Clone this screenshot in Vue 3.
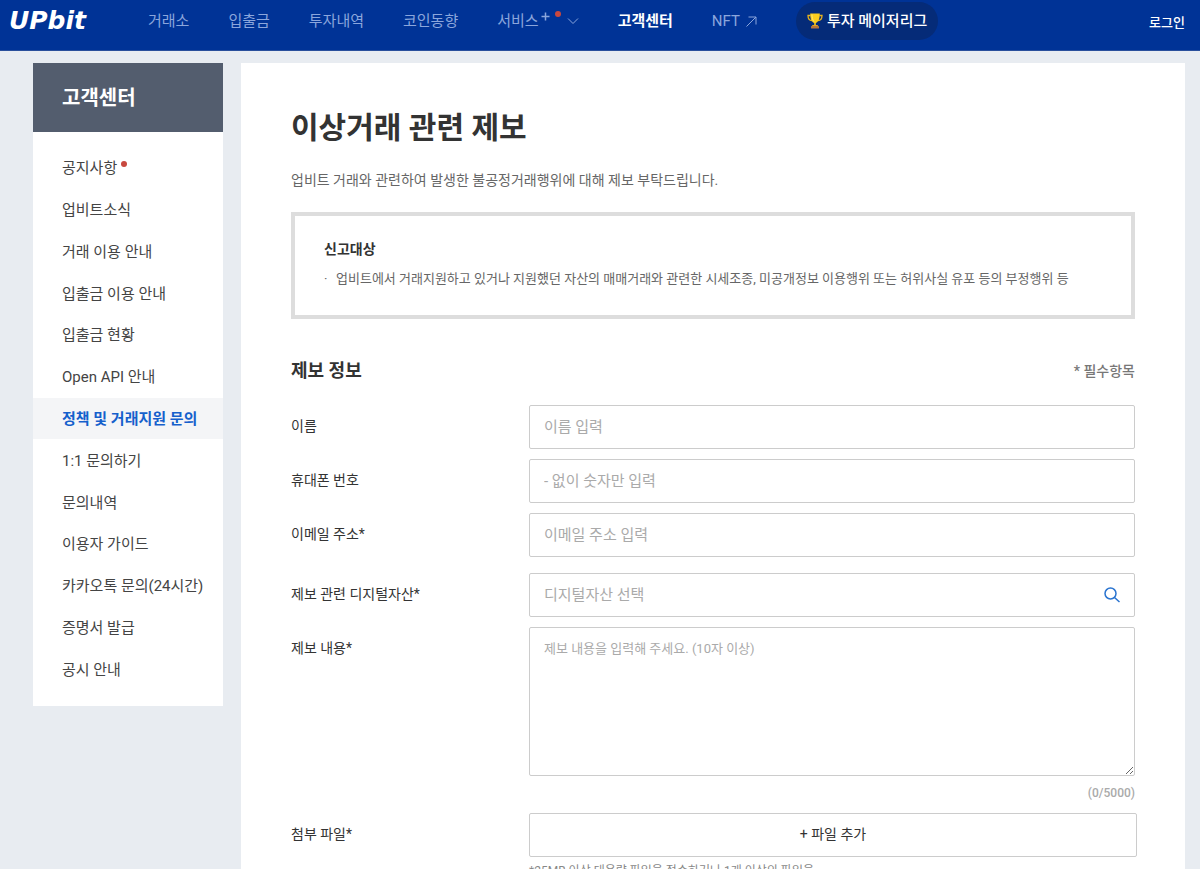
<script setup>
import { ref } from 'vue'

const sideMenu = [
  { label: '공지사항', isNew: true },
  { label: '업비트소식' },
  { label: '거래 이용 안내' },
  { label: '입출금 이용 안내' },
  { label: '입출금 현황' },
  { label: 'Open API 안내' },
  { label: '정책 및 거래지원 문의', active: true },
  { label: '1:1 문의하기' },
  { label: '문의내역' },
  { label: '이용자 가이드' },
  { label: '카카오톡 문의(24시간)' },
  { label: '증명서 발급' },
  { label: '공시 안내' },
]

const content = ref('')
</script>

<template>
  <div class="page">
    <header class="top">
      <a class="logo" href="#">UPbit</a>
      <nav class="gnb">
        <a href="#">거래소</a>
        <a href="#">입출금</a>
        <a href="#">투자내역</a>
        <a href="#">코인동향</a>
        <a href="#" class="service">
          <span>서비스</span>
          <svg class="plus" width="9" height="9" viewBox="0 0 9 9"><path d="M4.5 0.5v8M0.5 4.5h8" /></svg>
          <i class="dot"></i>
          <svg class="chev" width="12" height="8" viewBox="0 0 12 8"><path d="M1 1.5l5 5 5-5" /></svg>
        </a>
        <a href="#" class="on">고객센터</a>
        <a href="#" class="nft">
          <span>NFT</span>
          <svg width="11" height="11" viewBox="0 0 11 11"><path d="M0.5 10.5l9.5-9.5M2.5 1h7.5v7.5" /></svg>
        </a>
        <a href="#" class="league">
          <svg width="16" height="16" viewBox="0 0 16 16">
            <path d="M3.5 2.5H1c0 3 1 5 4 5.2M12.5 2.5H15c0 3-1 5-4 5.2" fill="none" stroke="#e8b21c" stroke-width="1.3" />
            <path d="M3.2 0.5h9.600c0 5-1.200 8.500-4 9.400v2.600H7.200V9.900C4.400 9 3.200 5.500 3.200 0.500z" fill="#fbcd1d" />
            <path d="M5 1.500c0 3 .5 5.500 2 7" fill="none" stroke="#ffe878" stroke-width="1" />
            <path d="M5.500 12h5l1 1.500h-7z" fill="#e8a51c" />
            <rect x="4" y="13" width="8" height="2.600" rx="0.500" fill="#b8763a" />
          </svg>
          <span>투자 메이저리그</span>
        </a>
      </nav>
      <a class="login" href="#">로그인</a>
    </header>

    <div class="body">
      <aside class="side">
        <h2>고객센터</h2>
        <ul>
          <li v-for="item in sideMenu" :key="item.label" :class="{ active: item.active }">
            <a href="#">{{ item.label }}</a><i v-if="item.isNew" class="dot"></i>
          </li>
        </ul>
      </aside>

      <main class="main">
        <h1>이상거래 관련 제보</h1>
        <p class="lead">업비트 거래와 관련하여 발생한 불공정거래행위에 대해 제보 부탁드립니다.</p>

        <section class="notice">
          <h3>신고대상</h3>
          <ul>
            <li>업비트에서 거래지원하고 있거나 지원했던 자산의 매매거래와 관련한 시세조종, 미공개정보 이용행위 또는 허위사실 유포 등의 부정행위 등</li>
          </ul>
        </section>

        <form @submit.prevent>
          <div class="form-head">
            <h2>제보 정보</h2>
            <span>* 필수항목</span>
          </div>

          <div class="group">
            <div class="row">
              <label for="name">이름</label>
              <input id="name" type="text" placeholder="이름 입력" />
            </div>
            <div class="row">
              <label for="phone">휴대폰 번호</label>
              <input id="phone" type="tel" placeholder="- 없이 숫자만 입력" />
            </div>
            <div class="row">
              <label for="email">이메일 주소*</label>
              <input id="email" type="email" placeholder="이메일 주소 입력" />
            </div>
          </div>

          <div class="group">
            <div class="row">
              <label for="asset">제보 관련 디지털자산*</label>
              <div class="search">
                <input id="asset" type="text" placeholder="디지털자산 선택" />
                <button type="button" aria-label="검색">
                  <svg width="16" height="16" viewBox="0 0 16 16"><circle cx="6.500" cy="6.500" r="5.500" /><path d="M10.500 10.500l5 4.500" /></svg>
                </button>
              </div>
            </div>
            <div class="row">
              <label for="content">제보 내용*</label>
              <div class="text">
                <textarea id="content" v-model="content" maxlength="5000" placeholder="제보 내용을 입력해 주세요. (10자 이상)"></textarea>
                <p class="count">({{ content.length }}/5000)</p>
              </div>
            </div>
            <div class="row file-row">
              <span id="file-label" class="label">첨부 파일*</span>
              <div>
                <button type="button" class="file" aria-describedby="file-label">+ 파일 추가</button>
                <p class="hint">*25MB 이상 대용량 파일을 접수하거나 1개 이상의 파일을</p>
              </div>
            </div>
          </div>
        </form>
      </main>
    </div>
  </div>
</template>

<style>
body {
  background: #e8ecf1;
}
</style>

<style scoped>
.page,
.page input,
.page textarea,
.page button {
  font-family: Roboto, "Noto Sans CJK KR", sans-serif;
}
.page {
  height: 100vh;
  overflow: hidden;
  color: #333;
}
.page * {
  box-sizing: border-box;
}
h1, h2, h3, p, ul {
  margin: 0;
  padding: 0;
}
ul {
  list-style: none;
}
a {
  color: inherit;
  text-decoration: none;
}
.dot {
  width: 6px;
  height: 6px;
  border-radius: 50%;
  background: #c8483e;
}

.top {
  display: flex;
  height: 51px;
  padding: 0 15px 8px 9px;
  align-items: center;
  background: #003396;
  border-bottom: 1px solid #2a4f9c;
  color: #fff;
}
.logo {
  width: 139px;
  font-family: "DejaVu Sans", sans-serif;
  font-size: 25px;
  line-height: 40px;
  font-weight: 700;
  font-style: italic;
}
.gnb {
  display: flex;
  flex: 1;
  align-items: center;
  gap: 39px;
  font-size: 15px;
  line-height: 40px;
  color: #8ba6dc;
  white-space: nowrap;
}
.gnb svg {
  fill: none;
  stroke: #8ba6dc;
  stroke-width: 1;
}
.gnb .on {
  color: #fff;
  font-weight: 700;
}
.service {
  display: flex;
  align-items: center;
}
.service .plus {
  margin: 0 5px 10px 2px;
  stroke-width: 1.5;
}
.service .dot {
  margin-bottom: 14px;
}
.service .chev {
  margin-left: 6px;
}
.nft {
  display: flex;
  align-items: center;
  gap: 6px;
}
.gnb .league {
  display: flex;
  align-items: center;
  gap: 4px;
  height: 38px;
  padding: 0 11px;
  border-radius: 19px;
  background: #052b78;
  color: #fff;
  font-weight: 500;
}
.league svg {
  stroke: none;
}
.login {
  font-size: 13px;
  font-weight: 500;
}

.body {
  display: flex;
  align-items: flex-start;
  gap: 18px;
  padding: 12px 15px 0 33px;
}
.side {
  flex: 0 0 190px;
  background: #fff;
}
.side h2 {
  padding: 1px 0 0 29px;
  background: #535d6e;
  color: #fff;
  font-size: 20px;
  line-height: 68px;
  font-weight: 700;
}
.side ul {
  display: grid;
  grid-auto-rows: 1fr;
  height: 574px;
  padding: 15px 0 16px;
}
.side li {
  display: flex;
  align-items: center;
  padding: 0 0 2px 29px;
  font-size: 15px;
  color: #444;
  white-space: nowrap;
}
.side li.active {
  background: #f4f5f7;
  color: #1560cc;
  font-weight: 700;
}
.side .dot {
  margin: 0 0 5px 4px;
}

.main {
  flex: 1;
  min-width: 0;
  padding: 40px 50px;
  background: #fff;
}
h1 {
  font-size: 30px;
  line-height: 50px;
  font-weight: 700;
}
.lead {
  margin-top: 17px;
  font-size: 14px;
  line-height: 20px;
  color: #666;
}
.notice {
  margin-top: 22px;
  padding: 20px 29px 24px;
  border: 4px solid #ddd;
}
.notice h3 {
  font-size: 14px;
  line-height: 26px;
  font-weight: 700;
}
.notice li {
  display: flex;
  margin-top: 4px;
  font-size: 13px;
  line-height: 25px;
  color: #666;
}
.notice li::before {
  content: "·";
  width: 12px;
  flex: none;
}
.form-head {
  display: flex;
  justify-content: space-between;
  align-items: center;
  margin-top: 37px;
  line-height: 30px;
}
.form-head h2 {
  font-size: 18px;
  font-weight: 700;
}
.form-head span {
  font-size: 14px;
  font-weight: 500;
  color: #777;
}
.group {
  display: grid;
  gap: 10px;
  margin-top: 19px;
}
.group + .group {
  margin-top: 16px;
}
.row {
  display: grid;
  grid-template-columns: 238px 1fr;
  align-items: start;
}
.row label,
.row .label {
  font-size: 14px;
  line-height: 42px;
}
.row input,
.row textarea,
.file {
  display: block;
  width: 100%;
  height: 44px;
  margin: 0;
  padding: 0 14px;
  border: 1px solid #ccc;
  border-radius: 2px;
  background: #fff;
  color: #333;
  font-size: 15px;
}
.row ::placeholder {
  color: #aaa;
  opacity: 1;
}
.search {
  display: grid;
  grid-template-columns: 1fr 46px;
}
.search input {
  grid-area: 1 / 1 / 2 / 3;
}
.search button {
  grid-area: 1 / 2 / 2 / 3;
  display: grid;
  place-items: center;
  border: 0;
  background: none;
}
.search svg {
  fill: none;
  stroke: #2a74d0;
  stroke-width: 1.5;
}
.row textarea {
  height: 149px;
  padding: 10px 14px;
  font-size: 13px;
  line-height: 22px;
}
.count {
  margin-top: 6px;
  font-size: 12px;
  line-height: 22px;
  font-weight: 500;
  color: #aaa;
  text-align: right;
}
.file-row {
  margin-top: -1px;
}
.row .file {
  width: calc(100% + 2px);
  padding-bottom: 5px;
  font-size: 14px;
}
.hint {
  margin-top: 4px;
  font-size: 12px;
  line-height: 20px;
  color: #888;
}
</style>
